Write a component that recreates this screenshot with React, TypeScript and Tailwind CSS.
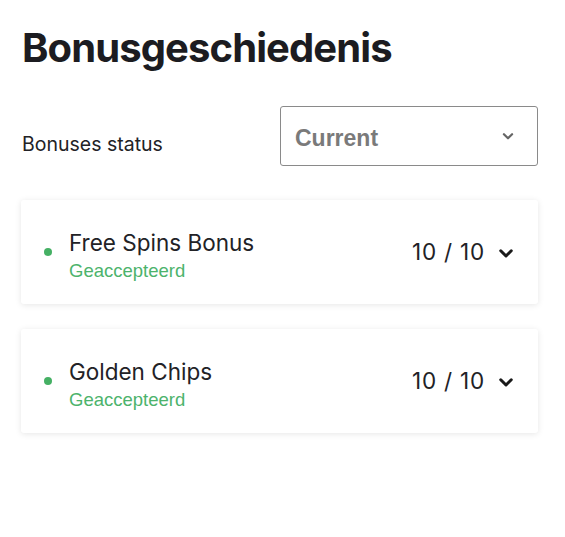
import React from "react";

const Chevron = ({ className, w = 3.5 }: { className?: string; w?: number }) => (
  <svg viewBox="0 0 24 24" className={className} fill="none" stroke="currentColor" strokeWidth={w} strokeLinecap="round" strokeLinejoin="round">
    <path d="M5 9l7 7 7-7" />
  </svg>
);

const Card = ({ title }: { title: string }) => (
  <div className="bg-white rounded-[3px] shadow-[0_1px_6px_rgba(0,0,0,0.10)] h-[104px] flex items-center pl-[23px] pr-[23px]">
    <div className="w-[8px] h-[8px] rounded-full bg-[#45b064] mr-[17px]" />
    <div className="flex flex-col flex-1 mt-[6px]">
      <div className="text-[22.5px] leading-[28px] text-[#222226] font-['Inter',sans-serif]">{title}</div>
      <div className="text-[18.5px] leading-[22px] text-[#4cb36c] font-['Liberation_Sans',Arial,sans-serif] mt-[3px]">Geaccepteerd</div>
    </div>
    <div className="text-[22.5px] text-[#222226] font-['Inter',sans-serif] mr-[12px] tracking-[0.8px]">10 / 10</div>
    <Chevron className="w-[18px] h-[18px] text-[#1a1a1a] mt-[1px]" w={4} />
  </div>
);

export default function App() {
  return (
    <div className="w-[565px] h-[537px] bg-white px-[21px] pt-[24px] font-['Inter',sans-serif]">
      <h1 className="text-[40px] leading-[48px] font-bold text-[#1c1c21] tracking-[-0.9px] ml-[1px]">Bonusgeschiedenis</h1>
      <div className="flex items-center justify-between mt-[34px]">
        <div className="text-[19.5px] text-[#222226] ml-[1px] mt-[18px]">Bonuses status</div>
        <div className="w-[258px] h-[60px] border border-[#8a8a8a] rounded-[3px] flex items-center justify-between pl-[14px] pr-[22px] mr-[6px]">
          <span className="text-[23px] font-bold text-[#7a7a7a] font-['Liberation_Sans',Arial,sans-serif] mt-[5px]">Current</span>
          <Chevron className="w-[14px] h-[14px] text-[#666]" w={3.8} />
        </div>
      </div>
      <div className="flex flex-col gap-[25px] mt-[34px] w-[517px]">
        <Card title="Free Spins Bonus" />
        <Card title="Golden Chips" />
      </div>
    </div>
  );
}
